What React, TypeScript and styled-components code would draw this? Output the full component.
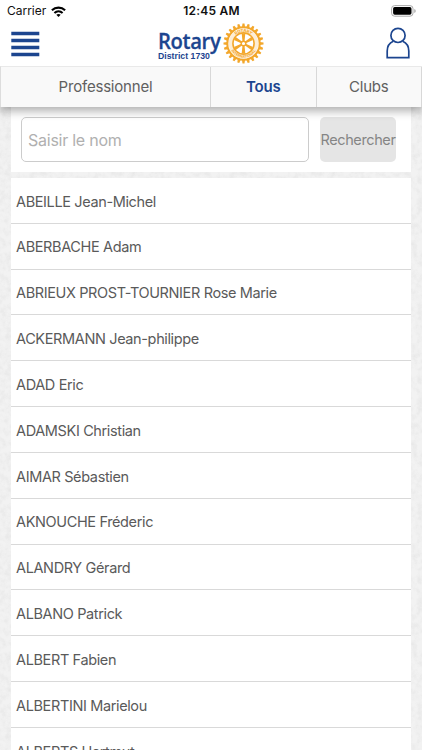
import React from "react";
import styled, { createGlobalStyle } from "styled-components";

const BLUE = "#1c458f";
const GOLD = "#f3a72b";

const grain = encodeURIComponent(
  `<svg xmlns="http://www.w3.org/2000/svg" width="200" height="200"><filter id="g" x="0" y="0" width="100%" height="100%"><feTurbulence type="fractalNoise" baseFrequency="0.17" numOctaves="4" seed="4" stitchTiles="stitch"/><feColorMatrix values="0 0 0 0 0.5  0 0 0 0 0.5  0 0 0 0 0.5  0.35 0 0 0 -0.13"/></filter><rect width="200" height="200" filter="url(#g)"/></svg>`
);

const GlobalStyle = createGlobalStyle`
  * { box-sizing: border-box; }
  html, body { margin: 0; overflow: hidden; background: #fff; }
  body { font-family: Inter, "Liberation Sans", sans-serif; color: #5a5a5a; }
`;

const Screen = styled.div`
  width: 422px;
  height: 750px;
  display: flex;
  flex-direction: column;
  overflow: hidden;
  background: #f2f2f2 url("data:image/svg+xml,${grain}");
`;

const StatusBar = styled.div`
  height: 22px;
  flex: none;
  display: grid;
  grid-template-columns: 1fr auto 1fr;
  align-items: center;
  padding: 0 6px 0 7px;
  background: #fff;
  color: #111;
  font-size: 12px;
  line-height: 22px;
`;

const Carrier = styled.div`
  display: flex;
  align-items: center;
  gap: 5px;
  letter-spacing: -0.02px;
`;

const Clock = styled.div`
  font-weight: 600;
  letter-spacing: 0.2px;
`;

const Battery = styled.svg`
  justify-self: end;
`;

const Header = styled.header`
  height: 44px;
  flex: none;
  display: grid;
  grid-template-columns: 1fr 107px 1fr;
  align-items: center;
  padding: 0 12px 0 11px;
  background: #fff;
`;

const IconButton = styled.button<{ $end?: boolean }>`
  display: flex;
  padding: 0;
  margin-top: ${(p) => (p.$end ? "-2px" : "-1px")};
  border: 0;
  background: none;
  justify-self: ${(p) => (p.$end ? "end" : "start")};
`;

const Logo = styled.div`
  display: flex;
  justify-content: space-between;
  align-items: center;
  color: ${BLUE};
  svg { flex: none; margin-top: -1px; }
`;

const Wordmark = styled.div`
  display: flex;
  flex-direction: column;
  width: 62px;
  padding-left: 1px;
  white-space: nowrap;
`;

const Brand = styled.span`
  font-family: "Open Sans", sans-serif;
  font-weight: 600;
  font-size: 22px;
  line-height: 24px;
  letter-spacing: -0.4px;
  -webkit-text-stroke: 0.3px ${BLUE};
  transform: scaleX(0.92);
  transform-origin: left;
`;

const District = styled.span`
  font-family: "Liberation Sans", sans-serif;
  font-weight: 700;
  font-size: 8.7px;
  line-height: 9px;
  letter-spacing: 0.02px;
`;

const Tabs = styled.nav`
  position: relative;
  height: 41px;
  flex: none;
  display: grid;
  grid-template-columns: 210px 105.5px 105.5px;
  background: #f9f9f9;
  border-top: 1px solid #e9e9e9;
  border-left: 1px solid #ddd;
  box-shadow: 0 4px 9px rgba(0, 0, 0, 0.32);
  clip-path: inset(0 0 -20px 0);
`;

const Tab = styled.button<{ $active?: boolean }>`
  border: 0;
  border-right: 1px solid #d8d8d8;
  background: none;
  padding: 0 0 1px;
  font-family: inherit;
  font-size: 15px;
  letter-spacing: -0.2px;
  font-weight: ${(p) => (p.$active ? 600 : 400)};
  color: ${(p) => (p.$active ? BLUE : "#606060")};
`;

const SearchPanel = styled.form`
  height: 65px;
  flex: none;
  margin: 0 11px;
  padding: 10px 15px 10px 10px;
  display: flex;
  gap: 11px;
  background: #fff;
`;

const SearchInput = styled.input`
  flex: 1;
  min-width: 0;
  height: 45px;
  padding: 0 6px;
  border: 1px solid #ccc;
  border-radius: 5px;
  background: transparent;
  font-family: inherit;
  font-size: 16px;
  letter-spacing: -0.25px;
  outline: 0;
  &::placeholder { color: #b0b0b0; opacity: 1; }
`;

const SearchButton = styled.button`
  width: 76px;
  height: 45px;
  padding: 0;
  border: 0;
  border-radius: 5px;
  background: #e5e5e5;
  color: #858585;
  font-family: inherit;
  font-size: 14.5px;
  letter-spacing: -0.38px;
  white-space: nowrap;
`;

const List = styled.ul`
  list-style: none;
  margin: 6px 11px 0;
  padding: 0;
  background: #fff;
`;

const Row = styled.li`
  height: 45.83px;
  padding: 1.4px 5px 0;
  display: flex;
  align-items: center;
  border-bottom: 1px solid #d9d9d9;
  font-size: 14.5px;
  letter-spacing: -0.37px;
  white-space: nowrap;
`;

const members = [
  "ABEILLE Jean-Michel",
  "ABERBACHE Adam",
  "ABRIEUX PROST-TOURNIER Rose Marie",
  "ACKERMANN Jean-philippe",
  "ADAD Eric",
  "ADAMSKI Christian",
  "AIMAR Sébastien",
  "AKNOUCHE Fréderic",
  "ALANDRY Gérard",
  "ALBANO Patrick",
  "ALBERT Fabien",
  "ALBERTINI Marielou",
  "ALBERTS Hartmut",
];

const teeth = Array.from({ length: 24 }, (_, i) => i * 15);
const spokes = [0, 60, 120, 180, 240, 300];

function Wheel() {
  return (
    <svg width="41" height="41" viewBox="-20.5 -20.5 41 41">
      <defs>
        <path id="arcTop" d="M-11.6 0A11.6 11.6 0 0 1 11.6 0" />
        <path id="arcBottom" d="M-14.2 0A14.2 14.2 0 0 0 14.2 0" />
      </defs>
      {teeth.map((a) => (
        <path key={a} d="M-1.6-16L-1-20H1L1.6-16Z" fill={GOLD} transform={`rotate(${a})`} />
      ))}
      <circle r="16.2" fill="none" stroke={GOLD} strokeWidth="2" />
      <circle r="13" fill="none" stroke={GOLD} strokeWidth="3.6" opacity="0.2" />
      <circle r="10.6" fill="none" stroke={GOLD} strokeWidth="1.6" />
      {spokes.map((a) => (
        <path key={a} d="M-1-2L-1.8-10H1.8L1-2Z" fill={GOLD} transform={`rotate(${a})`} />
      ))}
      <circle r="2.3" fill="#fff" stroke={GOLD} strokeWidth="1.4" />
      <g fill={GOLD} fontSize="4.2" fontWeight="700" textAnchor="middle">
        <text><textPath href="#arcTop" startOffset="50%">ROTARY</textPath></text>
        <text fontSize="3.6"><textPath href="#arcBottom" startOffset="50%">INTERNATIONAL</textPath></text>
      </g>
    </svg>
  );
}

export default function App() {
  return (
    <Screen>
      <GlobalStyle />
      <StatusBar>
        <Carrier>
          Carrier
          <svg width="15" height="11" viewBox="0 0 15 11" fill="none" stroke="#000" strokeWidth="2.1">
            <path d="M.9 4.3C4.6.7 10.4.7 14.1 4.3" />
            <path d="M3.4 7C5.8 4.8 9.2 4.8 11.6 7" />
            <path d="M7.5 11L5.3 8.8Q7.5 7 9.7 8.8Z" fill="#000" stroke="none" />
          </svg>
        </Carrier>
        <Clock>12:45 AM</Clock>
        <Battery width="25" height="12" viewBox="0 0 25 12">
          <rect x=".6" y=".6" width="21.4" height="10.6" rx="3" fill="#fff" stroke="#aaa" />
          <rect x="2.1" y="2.1" width="18.4" height="7.6" rx="1.6" fill="#000" />
          <path d="M23.4 4V8Q24.6 7.3 24.6 6T23.4 4Z" fill="#999" />
        </Battery>
      </StatusBar>
      <Header>
        <IconButton aria-label="Menu">
          <svg width="29" height="26" viewBox="0 0 29 26" stroke={BLUE} strokeWidth="3.7">
            <path d="M.3 2.5H28.3M.3 9.5H28.3M.3 16.5H28.3M.3 23.5H28.3" />
          </svg>
        </IconButton>
        <Logo>
          <Wordmark>
            <Brand>Rotary</Brand>
            <District>District 1730</District>
          </Wordmark>
          <Wheel />
        </Logo>
        <IconButton $end aria-label="Profil">
          <svg width="24" height="32" viewBox="0 0 24 32" fill="none" stroke={BLUE} strokeWidth="1.7">
            <circle cx="12" cy="8.4" r="7.1" />
            <path d="M7.3 14.2C3 16 1.2 19.6 1.2 24V30.6H22.8V24C22.8 19.6 21 16 16.7 14.2" />
          </svg>
        </IconButton>
      </Header>
      <Tabs>
        <Tab>Professionnel</Tab>
        <Tab $active>Tous</Tab>
        <Tab>Clubs</Tab>
      </Tabs>
      <SearchPanel>
        <SearchInput placeholder="Saisir le nom" />
        <SearchButton type="button">Rechercher</SearchButton>
      </SearchPanel>
      <List>
        {members.map((name) => (
          <Row key={name}>{name}</Row>
        ))}
      </List>
    </Screen>
  );
}
